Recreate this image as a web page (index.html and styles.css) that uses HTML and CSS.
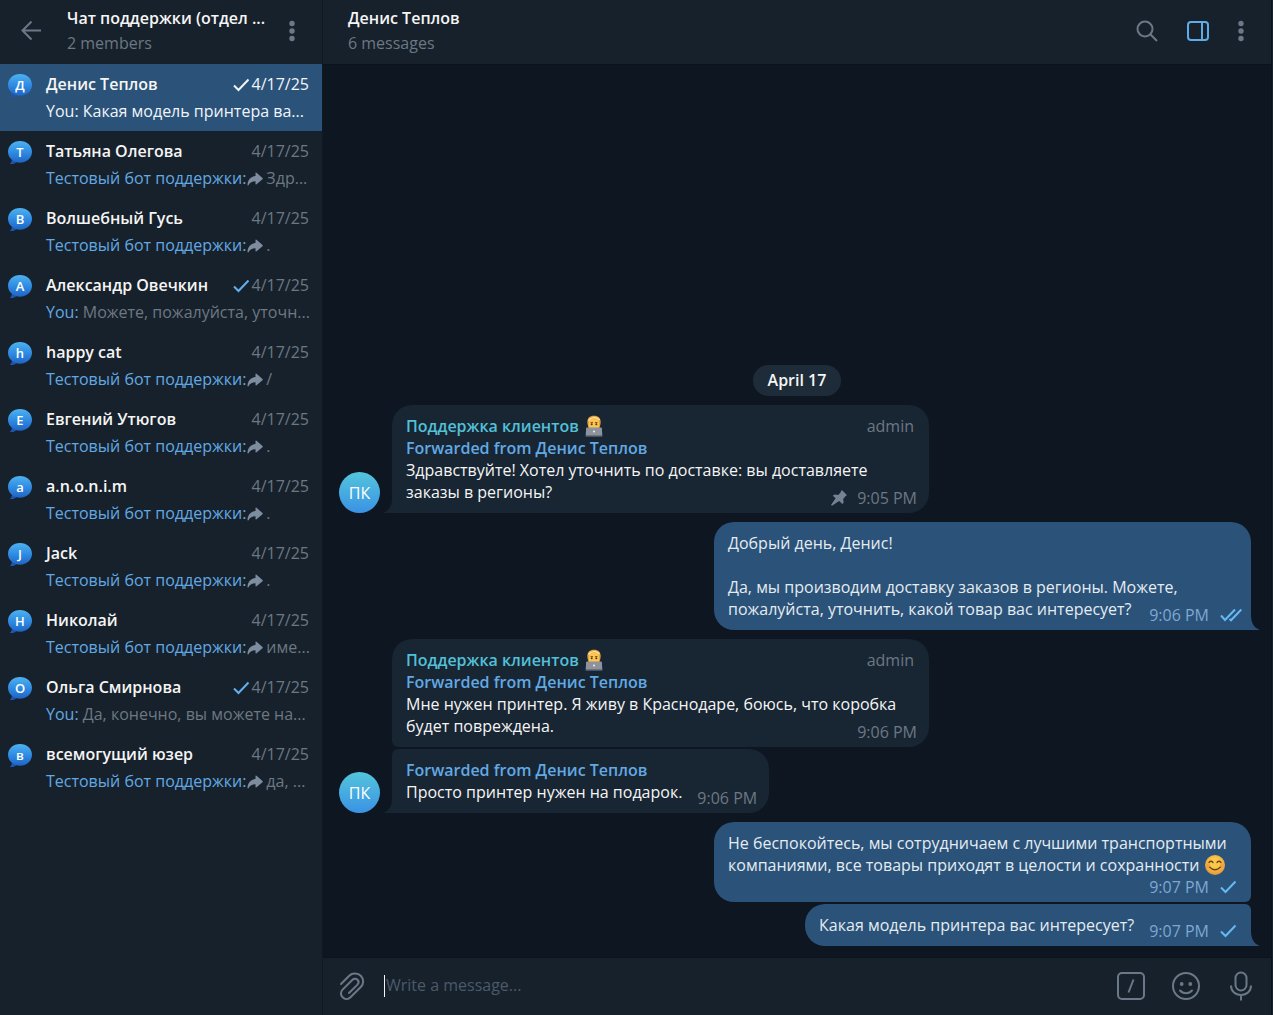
FILE: index.html
```
<!DOCTYPE html>
<html lang="ru">
<head>
    <meta charset="UTF-8">
    <meta name="viewport" content="width=device-width, initial-scale=1.0">
    <title>Чат поддержки</title>
    <link rel="stylesheet" href="styles.css">
</head>
<body>
    <!-- shared icons -->
    <svg class="sprite" aria-hidden="true">
        <defs>
            <linearGradient id="topic-fill" x1="0" y1="0" x2="0" y2="1">
                <stop offset="0" stop-color="#4db2f0"/>
                <stop offset="0.500" stop-color="#2f8ae2"/>
                <stop offset="1" stop-color="#1c5fc0"/>
            </linearGradient>
            <radialGradient id="face-fill" cx="0.5" cy="0.4" r="0.6">
                <stop offset="0.4" stop-color="#fbc94a"/>
                <stop offset="1" stop-color="#e5953a"/>
            </radialGradient>
        </defs>
        <symbol id="topic" viewBox="0 0 26 26">
            <path d="M13 1C6.200 1 1 5.600 1 11.800c0 3.500 1.600 6.200 4 8.200-.1 1.700-.9 3-2 4.100 2.400.1 4.400-.7 5.900-1.900 1.300.3 2.700.5 4.100.5 6.800 0 12-4.600 12-10.900S19.800 1 13 1z" fill="url(#topic-fill)"/>
            <path d="M5 20c-.1 1.700-.9 3-2 4.100 2.400.1 4.400-.7 5.900-1.900" fill="#1c54ae"/>
        </symbol>
        <symbol id="check" viewBox="0 0 22 16">
            <path d="M1 8.500l4.500 4.500L15.500 2.500" fill="none" stroke="currentColor" stroke-width="2"/>
        </symbol>
        <symbol id="double-check" viewBox="0 0 22 16">
            <path d="M1 8.500l4 4.500L15 2.500M9.500 12L11 13.300L21.300 2.500" fill="none" stroke="currentColor" stroke-width="2"/>
        </symbol>
        <symbol id="forward" viewBox="0 0 16 14">
            <path d="M8.500 1.200Q8.500 0 9.500.8L15.500 6q.6.600 0 1.200L9.500 12.300q-1 .7-1-.5V9.300C5.500 9.200 3.200 10.300 1.500 13.200q-.9 1-1-.4C.8 7.800 3.600 4.500 8.500 4z" fill="currentColor"/>
        </symbol>
        <symbol id="dots" viewBox="0 0 6 22">
            <circle cx="3" cy="3.500" r="2.700" fill="currentColor"/>
            <circle cx="3" cy="11" r="2.700" fill="currentColor"/>
            <circle cx="3" cy="18.500" r="2.700" fill="currentColor"/>
        </symbol>
        <symbol id="worker" viewBox="0 0 20 22">
            <path d="M1 21.500c0-4 1-7 4-7h10c3 0 4 3 4 7z" fill="#28467d"/>
            <path d="M3.500 9C2.500 3 6 .8 10 .8S17.500 3 16.500 9l-1 4h-11z" fill="#e8a33a"/>
            <rect x="5" y="4" width="10" height="11" rx="4" fill="#fbc553"/>
            <path d="M4.500 5.500C7 2 12 1.500 15.500 5" fill="none" stroke="#fbe3a8" stroke-width="1.500"/>
            <path d="M6.500 7.500h2.500M11 7.500h2.500" stroke="#8a5a24"/>
            <circle cx="7.700" cy="9.200" r="1" fill="#4c3520"/>
            <circle cx="12.300" cy="9.200" r="1" fill="#4c3520"/>
            <rect x="2" y="12.500" width="16" height="8.500" rx="1" fill="#8d929b"/>
            <rect x="2" y="20" width="16" height="1.500" fill="#6b7079"/>
            <circle cx="10" cy="16.500" r="1" fill="#eef1f5"/>
        </symbol>
    </svg>

    <aside class="sidebar">
        <header class="sidebar-header">
            <button class="icon-btn" aria-label="Назад">
                <svg width="20" height="20" viewBox="0 0 20 20"><path d="M20 9.500H1.500M10.500 .5L1.500 9.500l9 9" fill="none" stroke="currentColor" stroke-width="2"/></svg>
            </button>
            <div class="heading">
                <h2>Чат поддержки (отдел ...</h2>
                <p>2 members</p>
            </div>
            <button class="icon-btn" aria-label="Меню"><svg width="6" height="22"><use href="#dots"/></svg></button>
        </header>
        <nav class="topics">
            <a href="#" class="topic active">
                <span class="topic-icon"><svg width="26" height="26"><use href="#topic"/></svg><b>Д</b></span>
                <span class="topic-name">Денис Теплов</span>
                <span class="topic-date"><svg class="check" width="22" height="16"><use href="#check"/></svg>4/17/25</span>
                <span class="preview"><em>You:</em> Какая модель принтера ва...</span>
            </a>
            <a href="#" class="topic">
                <span class="topic-icon"><svg width="26" height="26"><use href="#topic"/></svg><b>Т</b></span>
                <span class="topic-name">Татьяна Олегова</span>
                <span class="topic-date">4/17/25</span>
                <span class="preview"><em>Тестовый бот поддержки:</em><svg class="forward" width="16" height="14"><use href="#forward"/></svg>Здр...</span>
            </a>
            <a href="#" class="topic">
                <span class="topic-icon"><svg width="26" height="26"><use href="#topic"/></svg><b>В</b></span>
                <span class="topic-name">Волшебный Гусь</span>
                <span class="topic-date">4/17/25</span>
                <span class="preview"><em>Тестовый бот поддержки:</em><svg class="forward" width="16" height="14"><use href="#forward"/></svg>.</span>
            </a>
            <a href="#" class="topic">
                <span class="topic-icon"><svg width="26" height="26"><use href="#topic"/></svg><b>А</b></span>
                <span class="topic-name">Александр Овечкин</span>
                <span class="topic-date"><svg class="check" width="22" height="16"><use href="#check"/></svg>4/17/25</span>
                <span class="preview"><em>You:</em> Можете, пожалуйста, уточн...</span>
            </a>
            <a href="#" class="topic">
                <span class="topic-icon"><svg width="26" height="26"><use href="#topic"/></svg><b>h</b></span>
                <span class="topic-name">happy cat</span>
                <span class="topic-date">4/17/25</span>
                <span class="preview"><em>Тестовый бот поддержки:</em><svg class="forward" width="16" height="14"><use href="#forward"/></svg>/</span>
            </a>
            <a href="#" class="topic">
                <span class="topic-icon"><svg width="26" height="26"><use href="#topic"/></svg><b>Е</b></span>
                <span class="topic-name">Евгений Утюгов</span>
                <span class="topic-date">4/17/25</span>
                <span class="preview"><em>Тестовый бот поддержки:</em><svg class="forward" width="16" height="14"><use href="#forward"/></svg>.</span>
            </a>
            <a href="#" class="topic">
                <span class="topic-icon"><svg width="26" height="26"><use href="#topic"/></svg><b>a</b></span>
                <span class="topic-name">a.n.o.n.i.m</span>
                <span class="topic-date">4/17/25</span>
                <span class="preview"><em>Тестовый бот поддержки:</em><svg class="forward" width="16" height="14"><use href="#forward"/></svg>.</span>
            </a>
            <a href="#" class="topic">
                <span class="topic-icon"><svg width="26" height="26"><use href="#topic"/></svg><b>J</b></span>
                <span class="topic-name">Jack</span>
                <span class="topic-date">4/17/25</span>
                <span class="preview"><em>Тестовый бот поддержки:</em><svg class="forward" width="16" height="14"><use href="#forward"/></svg>.</span>
            </a>
            <a href="#" class="topic">
                <span class="topic-icon"><svg width="26" height="26"><use href="#topic"/></svg><b>Н</b></span>
                <span class="topic-name">Николай</span>
                <span class="topic-date">4/17/25</span>
                <span class="preview"><em>Тестовый бот поддержки:</em><svg class="forward" width="16" height="14"><use href="#forward"/></svg>име...</span>
            </a>
            <a href="#" class="topic">
                <span class="topic-icon"><svg width="26" height="26"><use href="#topic"/></svg><b>О</b></span>
                <span class="topic-name">Ольга Смирнова</span>
                <span class="topic-date"><svg class="check" width="22" height="16"><use href="#check"/></svg>4/17/25</span>
                <span class="preview"><em>You:</em> Да, конечно, вы можете на...</span>
            </a>
            <a href="#" class="topic">
                <span class="topic-icon"><svg width="26" height="26"><use href="#topic"/></svg><b>в</b></span>
                <span class="topic-name">всемогущий юзер</span>
                <span class="topic-date">4/17/25</span>
                <span class="preview"><em>Тестовый бот поддержки:</em><svg class="forward" width="16" height="14"><use href="#forward"/></svg>да, ...</span>
            </a>
        </nav>
    </aside>

    <main class="chat">
        <header class="chat-header">
            <div class="heading">
                <h1>Денис Теплов</h1>
                <p>6 messages</p>
            </div>
            <div class="actions">
                <button class="icon-btn" aria-label="Поиск">
                    <svg width="22" height="22" viewBox="0 0 22 22" fill="none" stroke="currentColor" stroke-width="2"><circle cx="9" cy="9" r="7.500"/><path d="M14.300 14.300L21 21"/></svg>
                </button>
                <button class="icon-btn on" aria-label="Боковая панель">
                    <svg width="24" height="22" viewBox="0 0 24 22" fill="none" stroke="currentColor" stroke-width="2"><rect x="2" y="2" width="20" height="18" rx="3"/><path d="M16 2v18"/></svg>
                </button>
                <button class="icon-btn" aria-label="Меню"><svg width="6" height="22"><use href="#dots"/></svg></button>
            </div>
        </header>

        <section class="messages">
            <div class="day">April 17</div>

            <div class="group in">
                <div class="avatar">ПК</div>
                <div class="stack">
                    <article class="bubble tail">
                        <div class="sender"><span>Поддержка клиентов <svg class="emoji" width="20" height="22"><use href="#worker"/></svg></span><small>admin</small></div>
                        <div class="forwarded">Forwarded from Денис Теплов</div>
                        <p>Здравствуйте! Хотел уточнить по доставке: вы доставляете заказы в регионы?
                            <span class="meta"><svg class="pin" width="16" height="16" viewBox="0 0 16 16"><path d="M10.200.6q.6-.4 1.200 0l4 4q.5.600 0 1.200l-1 .5-2.200 2.700.4 3.200q0 .6-.4 1l-.8.800-3.300-3L1 15.700l-.9-.9 4.500-6.500L1.800 5.800l.9-.9q.5-.4 1-.4l3.500.4 2.400-2.300z" fill="currentColor"/></svg>9:05 PM</span></p>
                        <svg class="tail-shape" width="8" height="16" viewBox="0 0 8 16"><path d="M8 0C8 8 6 13 0 15.500V16h8z" fill="currentColor"/></svg>
                    </article>
                </div>
            </div>

            <div class="group out">
                <div class="stack">
                    <article class="bubble tail">
                        <p>Добрый день, Денис!<br><br>Да, мы производим доставку заказов в регионы. Можете, пожалуйста, уточнить, какой товар вас интересует?
                            <span class="meta">9:06 PM<svg class="status" width="22" height="16"><use href="#double-check"/></svg></span></p>
                        <svg class="tail-shape" width="8" height="16" viewBox="0 0 8 16"><path d="M0 0C0 8 2 13 8 15.500V16H0z" fill="currentColor"/></svg>
                    </article>
                </div>
            </div>

            <div class="group in">
                <div class="avatar">ПК</div>
                <div class="stack">
                    <article class="bubble">
                        <div class="sender"><span>Поддержка клиентов <svg class="emoji" width="20" height="22"><use href="#worker"/></svg></span><small>admin</small></div>
                        <div class="forwarded">Forwarded from Денис Теплов</div>
                        <p>Мне нужен принтер. Я живу в Краснодаре, боюсь, что коробка будет повреждена.
                            <span class="meta">9:06 PM</span></p>
                    </article>
                    <article class="bubble tail">
                        <div class="forwarded">Forwarded from Денис Теплов</div>
                        <p>Просто принтер нужен на подарок. <span class="meta">9:06 PM</span></p>
                        <svg class="tail-shape" width="8" height="16" viewBox="0 0 8 16"><path d="M8 0C8 8 6 13 0 15.500V16h8z" fill="currentColor"/></svg>
                    </article>
                </div>
            </div>

            <div class="group out">
                <div class="stack">
                    <article class="bubble">
                        <p>Не беспокойтесь, мы сотрудничаем с лучшими транспортными компаниями, все товары приходят в целости и сохранности
                            <svg class="emoji" width="22" height="22" viewBox="0 0 22 22"><circle cx="11" cy="11" r="10" fill="url(#face-fill)"/><g fill="none" stroke="#6d4218" stroke-width="1.300" stroke-linecap="round"><path d="M5 8.500q2-2.500 4 0M13 8.500q2-2.500 4 0"/><path d="M5.500 13q5.500 5.500 11 0"/></g><circle cx="4.500" cy="11.500" r="2" fill="#f0893c" opacity=".5"/><circle cx="17.500" cy="11.500" r="2" fill="#f0893c" opacity=".5"/></svg>
                            <span class="meta below">9:07 PM<svg class="status" width="22" height="16"><use href="#check"/></svg></span></p>
                    </article>
                    <article class="bubble tail">
                        <p>Какая модель принтера вас интересует? <span class="meta">9:07 PM<svg class="status" width="22" height="16"><use href="#check"/></svg></span></p>
                        <svg class="tail-shape" width="8" height="16" viewBox="0 0 8 16"><path d="M0 0C0 8 2 13 8 15.500V16H0z" fill="currentColor"/></svg>
                    </article>
                </div>
            </div>
        </section>

        <form class="composer">
            <button type="button" class="icon-btn" aria-label="Прикрепить файл">
                <svg width="26" height="28" viewBox="0 0 26 28" fill="none" stroke="currentColor" stroke-width="2" stroke-linecap="round"><path d="M2 12L10.500 3.500C13 1 19 .8 22 4s2.800 8 0 10.800L11.500 25.300c-2.400 2.300-5.800 2-7.900 0s-2.300-5.300 0-7.700L13.500 7.800c1.500-1.500 3.700-1.300 5 0s1.300 3.400 0 4.800L10 21"/></svg>
            </button>
            <input type="text" placeholder="Write a message..." aria-label="Сообщение">
            <div class="tools">
                <button type="button" class="icon-btn" aria-label="Команды">
                    <svg width="28" height="28" viewBox="0 0 28 28" fill="none" stroke="currentColor" stroke-width="2"><rect x="1" y="1" width="26" height="26" rx="4"/><path d="M16.500 7.500L11.500 20.500"/></svg>
                </button>
                <button type="button" class="icon-btn" aria-label="Эмодзи">
                    <svg width="28" height="28" viewBox="0 0 28 28" fill="none" stroke="currentColor" stroke-width="2"><circle cx="14" cy="14" r="13"/><path d="M8 18.500c3 3.500 9 3.500 12 0" stroke-linecap="round"/><g fill="currentColor" stroke="none"><circle cx="9.700" cy="12" r="1.900"/><circle cx="18.300" cy="12" r="1.900"/></g></svg>
                </button>
                <button type="button" class="icon-btn" aria-label="Голосовое сообщение">
                    <svg width="28" height="30" viewBox="0 0 28 30" fill="none" stroke="currentColor" stroke-width="2"><rect x="8.500" y="1.500" width="11" height="18" rx="5.500"/><path d="M4 14.500c0 5.500 4 9.500 10 9.500s10-4 10-9.500M14 24v5.500"/></svg>
                </button>
            </div>
        </form>
    </main>
</body>
</html>
```
FILE: styles.css
```
*{
    margin: 0;
    padding: 0;
    box-sizing: border-box;
}
body{
    display: flex;
    height: 100vh;
    padding-right: 1px;
    overflow: hidden;
    background: #17212b;
    color: #f5f5f5;
    font-family: 'Open Sans', 'Noto Sans', sans-serif;
    font-size: 16px;
    line-height: 22px;
}
svg{
    display: block;
    flex: none;
}
.sprite{
    position: absolute;
    width: 0;
    height: 0;
}
.icon-btn{
    border: 0;
    background: none;
    color: #6b7887;
    cursor: pointer;
}
.icon-btn.on{
    color: #5eabe8;
}
.heading{
    flex: 1;
    min-width: 0;
    white-space: nowrap;
}
.heading h1,
.heading h2{
    font-size: 16px;
    font-weight: 600;
    line-height: 24px;
}
.heading p{
    color: #6c7883;
    line-height: 26px;
}

/* Sidebar */
.sidebar{
    flex: none;
    width: 323px;
    border-right: 1px solid #101921;
}
.sidebar-header{
    display: flex;
    align-items: center;
    height: 65px;
    padding: 0 27px 3px 21px;
    gap: 26px;
    border-bottom: 1px solid #1d2c3a;
}
.sidebar-header .heading{
    margin-right: -8px;
}
.topics{
    margin-top: -1px;
}
.topic{
    display: grid;
    grid-template-columns: 26px 1fr auto;
    grid-template-rows: 27px 27px;
    column-gap: 13px;
    height: 67px;
    padding: 7px 13px 6px 7px;
    color: #6c7883;
    line-height: 27px;
    text-decoration: none;
    white-space: nowrap;
}
.topic-icon{
    position: relative;
    height: 26px;
    margin-top: 2px;
}
.topic-icon b{
    position: absolute;
    inset: 0 0 2px;
    color: #fff;
    font-size: 13px;
    font-weight: 600;
    line-height: 24px;
    text-align: center;
}
.topic-name{
    color: #f5f5f5;
    font-weight: 600;
}
.topic-date{
    display: flex;
    align-items: center;
}
.topic-date .check{
    margin-right: -3px;
    color: #62b0f0;
}
.preview{
    grid-column: 2 / 4;
    display: flex;
    align-items: center;
    white-space: pre;
}
.preview em{
    color: #62a9e4;
    font-style: normal;
}
.forward{
    margin: 0 3px 0 1px;
    color: #7e8c9f;
}
.topic.active{
    background: #2b5278;
    color: #f0f5fa;
}
.active .preview em,
.active .check{
    color: #f0f5fa;
}

/* Chat */
.chat{
    flex: 1;
    display: flex;
    flex-direction: column;
    min-width: 0;
    border-right: 1px solid #0a121a;
    background: #0e1621;
}
.chat-header{
    display: flex;
    align-items: center;
    height: 65px;
    padding: 0 27px 3px 25px;
    border-bottom: 1px solid #0b131b;
    background: #17212b;
}
.actions{
    display: flex;
    align-items: center;
    gap: 28px;
}
.messages{
    flex: 1;
    display: flex;
    flex-direction: column;
    justify-content: flex-end;
    gap: 9px;
    padding-bottom: 11px;
}
.day{
    align-self: center;
    padding: 4px 15px 5px;
    border-radius: 16px;
    background: #1e2c39;
    font-weight: 600;
}
.group{
    display: flex;
    align-items: flex-end;
    gap: 12px;
    padding: 0 20px 0 16px;
}
.group.out{
    justify-content: flex-end;
}
.stack{
    display: flex;
    flex-direction: column;
    align-items: flex-start;
    gap: 2px;
}
.out .stack{
    align-items: flex-end;
}
.avatar{
    width: 41px;
    height: 41px;
    border-radius: 50%;
    background: linear-gradient(#53c5dc, #3a92e4);
    color: #fff;
    font-weight: 500;
    line-height: 42px;
    text-align: center;
}
.bubble{
    position: relative;
    max-width: 537px;
    padding: 10px 14px;
    border-radius: 20px 20px 20px 6px;
    background: #182533;
}
.bubble p{
    display: flow-root;
    margin-right: -5px;
    padding-right: 5px;
}
.in .tail{
    border-bottom-left-radius: 0;
}
.in .bubble + .bubble{
    border-top-left-radius: 6px;
}
.out .bubble{
    border-radius: 20px 20px 6px 20px;
    background: #2b5278;
    color: #e4ecf2;
}
.out .bubble + .bubble{
    border-top-right-radius: 6px;
}
.out .tail{
    border-bottom-right-radius: 0;
}
.tail-shape{
    position: absolute;
    bottom: 0;
    right: 100%;
    color: #182533;
}
.out .tail-shape{
    right: auto;
    left: 100%;
    color: #2b5278;
}
.sender{
    display: flex;
    justify-content: space-between;
    height: 22px;
    color: #52c0d6;
    font-weight: 600;
}
.sender .emoji{
    margin-left: 1px;
}
.sender small{
    margin-right: 1px;
    color: #6c7883;
    font-size: 16px;
    font-weight: 400;
}
.forwarded{
    color: #62a9e4;
    font-weight: 600;
}
.emoji{
    display: inline-block;
    vertical-align: top;
}
.meta{
    display: flex;
    float: right;
    align-items: center;
    height: 22px;
    margin: 6px -2px -6px 15px;
    color: #6c7883;
}
.out .meta{
    margin-right: -5px;
    color: #7da8d3;
}
.out .meta.below{
    margin-top: 0;
}
.pin{
    margin-right: 10px;
    color: #738393;
}
.status{
    margin-left: 11px;
    color: #65b9f4;
}

/* Message box */
.composer{
    display: flex;
    align-items: center;
    height: 58px;
    padding: 0 16px 1px;
    border-top: 1px solid #0b131b;
    background: #17212b;
}
.composer input{
    flex: 1;
    min-width: 0;
    height: 22px;
    margin-left: 19px;
    padding: 0 0 2px 1px;
    border: 0;
    border-left: 1px solid #f5f5f5;
    outline: 0;
    background: none;
    color: #f5f5f5;
    font: inherit;
}
.composer input::placeholder{
    color: #4a5a6b;
}
.tools{
    display: flex;
    align-items: center;
    gap: 27px;
}
```
